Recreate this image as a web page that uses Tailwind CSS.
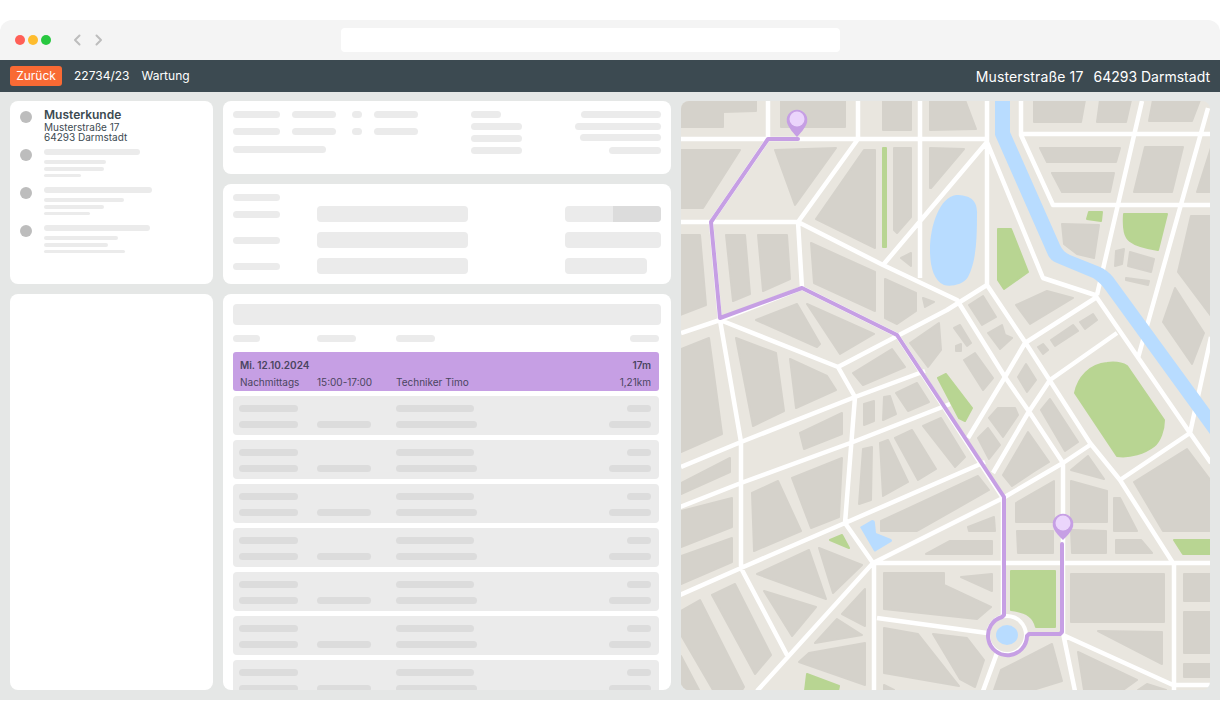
<!DOCTYPE html>
<html lang="de">

<head>
    <meta charset="UTF-8">
    <meta name="viewport" content="width=device-width, initial-scale=1.0">
    <title>Termin - Musterkunde</title>
    <script src="https://cdn.jsdelivr.net/npm/@tailwindcss/browser@4"></script>
</head>

<body class="bg-white [font-family:Inter,sans-serif] text-[#3c4a51]">
    <div class="h-[720px] overflow-hidden pt-5">
        <!-- Browser chrome -->
        <div class="h-10 bg-[#f4f4f4] rounded-t-xl flex items-center relative">
            <div class="flex gap-[3px] pl-[15px]">
                <span class="w-[10px] h-[10px] rounded-full bg-[#ff5f57]"></span>
                <span class="w-[10px] h-[10px] rounded-full bg-[#febc2e]"></span>
                <span class="w-[10px] h-[10px] rounded-full bg-[#28c840]"></span>
            </div>
            <div class="flex gap-3 ml-[21px]">
                <svg class="w-[10px] h-[12px]" viewBox="0 0 10 12" fill="none" stroke="#bdbdbd" stroke-width="2" stroke-linecap="round" stroke-linejoin="round"><path d="M7.5 1.5 3 6l4.5 4.5"/></svg>
                <svg class="w-[10px] h-[12px]" viewBox="0 0 10 12" fill="none" stroke="#bdbdbd" stroke-width="2" stroke-linecap="round" stroke-linejoin="round"><path d="M2.5 1.5 7 6l-4.5 4.5"/></svg>
            </div>
            <div class="ml-[237px] w-[499px] h-6 bg-white rounded-[4px]"></div>
        </div>

        <!-- Toolbar -->
        <div class="h-8 bg-[#3c4a51] text-white flex items-center px-[10px]">
            <span class="w-[52px] h-5 bg-[#f96a34] rounded-[3px] text-[12px] leading-5 text-center">Zurück</span>
            <span class="ml-3 text-[12px]">22734/23</span>
            <span class="ml-3 text-[12px]">Wartung</span>
            <span class="ml-auto text-[14px] tracking-[0.01em]">Musterstraße 17</span>
            <span class="ml-[10px] text-[14px]">64293 Darmstadt</span>
        </div>

        <!-- Content -->
        <div class="h-[608px] bg-[#e5e7e6] p-[10px] pt-[9px] flex gap-[10px]">
            <!-- Left column -->
            <div class="w-[203px] flex flex-col gap-[10px]">
                <div class="h-[183px] bg-white rounded-lg pl-[10px] pt-[10px]">
                    <div class="h-[38px] flex gap-3">
                        <span class="w-3 h-3 rounded-full bg-[#bdbdbd]"></span>
                        <div class="-mt-[2px]">
                            <div class="text-[12px] leading-3 font-semibold">Musterkunde</div>
                            <div class="text-[10px] leading-[10px] mt-[1px]">Musterstraße 17</div>
                            <div class="text-[10px] leading-[10px]">64293 Darmstadt</div>
                        </div>
                    </div>
                    <div class="h-[38px] flex gap-3">
                        <span class="w-3 h-3 rounded-full bg-[#bdbdbd]"></span>
                        <div class="flex flex-col gap-[3px]">
                            <div class="w-[96px] h-[6px] rounded-full bg-[#ebebeb] mb-[2px]"></div>
                            <div class="w-[62px] h-1 rounded-full bg-[#ebebeb]"></div>
                            <div class="w-[60px] h-1 rounded-full bg-[#ebebeb]"></div>
                            <div class="w-[37px] h-[3px] rounded-full bg-[#ebebeb]"></div>
                        </div>
                    </div>
                    <div class="h-[38px] flex gap-3">
                        <span class="w-3 h-3 rounded-full bg-[#bdbdbd]"></span>
                        <div class="flex flex-col gap-[3px]">
                            <div class="w-[108px] h-[6px] rounded-full bg-[#ebebeb] mb-[2px]"></div>
                            <div class="w-[80px] h-1 rounded-full bg-[#ebebeb]"></div>
                            <div class="w-[60px] h-1 rounded-full bg-[#ebebeb]"></div>
                            <div class="w-[46px] h-[3px] rounded-full bg-[#ebebeb]"></div>
                        </div>
                    </div>
                    <div class="h-[38px] flex gap-3">
                        <span class="w-3 h-3 rounded-full bg-[#bdbdbd]"></span>
                        <div class="flex flex-col gap-[3px]">
                            <div class="w-[106px] h-[6px] rounded-full bg-[#ebebeb] mb-[2px]"></div>
                            <div class="w-[74px] h-1 rounded-full bg-[#ebebeb]"></div>
                            <div class="w-[64px] h-1 rounded-full bg-[#ebebeb]"></div>
                            <div class="w-[81px] h-[3px] rounded-full bg-[#ebebeb]"></div>
                        </div>
                    </div>
                </div>
                <div class="flex-1 bg-white rounded-lg"></div>
            </div>

            <!-- Middle column -->
            <div class="w-[448px] flex flex-col gap-[10px]">
                <!-- Summary card -->
                <div class="h-[73px] bg-white rounded-lg p-[10px] flex">
                    <div class="w-[238px]">
                        <div class="flex">
                            <div class="w-[47px] h-[7px] rounded-[4px] bg-[#ebebeb]"></div>
                            <div class="ml-3 w-[44px] h-[7px] rounded-[4px] bg-[#ebebeb]"></div>
                            <div class="ml-4 w-[10px] h-[7px] rounded-[4px] bg-[#ebebeb]"></div>
                            <div class="ml-3 w-[44px] h-[7px] rounded-[4px] bg-[#ebebeb]"></div>
                        </div>
                        <div class="flex mt-[10px]">
                            <div class="w-[47px] h-[7px] rounded-[4px] bg-[#ebebeb]"></div>
                            <div class="ml-3 w-[44px] h-[7px] rounded-[4px] bg-[#ebebeb]"></div>
                            <div class="ml-4 w-[10px] h-[7px] rounded-[4px] bg-[#ebebeb]"></div>
                            <div class="ml-3 w-[44px] h-[7px] rounded-[4px] bg-[#ebebeb]"></div>
                        </div>
                        <div class="mt-[11px] w-[93px] h-[7px] rounded-[4px] bg-[#ebebeb]"></div>
                    </div>
                    <div class="flex flex-col gap-[5px]">
                        <div class="w-[30px] h-[7px] rounded-[4px] bg-[#ebebeb]"></div>
                        <div class="w-[51px] h-[7px] rounded-[4px] bg-[#ebebeb]"></div>
                        <div class="w-[51px] h-[7px] rounded-[4px] bg-[#ebebeb]"></div>
                        <div class="w-[51px] h-[7px] rounded-[4px] bg-[#ebebeb]"></div>
                    </div>
                    <div class="flex-1 flex flex-col items-end gap-[5px]">
                        <div class="w-[80px] h-[7px] rounded-[4px] bg-[#ebebeb]"></div>
                        <div class="w-[86px] h-[7px] rounded-[4px] bg-[#ebebeb]"></div>
                        <div class="w-[81px] h-[7px] rounded-[4px] bg-[#ebebeb] -mt-px mb-px"></div>
                        <div class="w-[52px] h-[7px] rounded-[4px] bg-[#ebebeb]"></div>
                    </div>
                </div>

                <!-- Form card -->
                <div class="h-[100px] bg-white rounded-lg p-[10px]">
                    <div class="w-[47px] h-[7px] rounded-[4px] bg-[#ebebeb] mb-[5px]"></div>
                    <div class="grid grid-cols-[84px_151px_97px_96px] gap-y-[10px] items-center">
                        <div class="w-[47px] h-[7px] rounded-[4px] bg-[#ebebeb]"></div>
                        <div class="h-4 rounded-[4px] bg-[#ebebeb]"></div>
                        <div></div>
                        <div class="h-4 rounded-[4px] bg-[#ebebeb] overflow-hidden flex justify-end"><div class="w-12 bg-[#dcdcdc]"></div></div>
                        <div class="w-[47px] h-[7px] rounded-[4px] bg-[#ebebeb]"></div>
                        <div class="h-4 rounded-[4px] bg-[#ebebeb]"></div>
                        <div></div>
                        <div class="h-4 rounded-[4px] bg-[#ebebeb]"></div>
                        <div class="w-[47px] h-[7px] rounded-[4px] bg-[#ebebeb]"></div>
                        <div class="h-4 rounded-[4px] bg-[#ebebeb]"></div>
                        <div></div>
                        <div class="w-[82px] h-4 rounded-[4px] bg-[#ebebeb]"></div>
                    </div>
                </div>

                <!-- Appointment list -->
                <div class="flex-1 min-h-0 bg-white rounded-lg overflow-hidden px-[10px] pt-[10px]">
                    <div class="h-[21px] rounded-[4px] bg-[#ebebeb]"></div>
                    <div class="grid grid-cols-[84px_79px_1fr_auto] w-[426px] mt-[10px] mb-[10px]">
                        <div class="w-[27px] h-[7px] rounded-[4px] bg-[#ebebeb]"></div>
                        <div class="w-[39px] h-[7px] rounded-[4px] bg-[#ebebeb]"></div>
                        <div class="w-[39px] h-[7px] rounded-[4px] bg-[#ebebeb]"></div>
                        <div class="w-[29px] h-[7px] rounded-[4px] bg-[#ebebeb]"></div>
                    </div>
                    <div class="w-[426px] flex flex-col gap-[5px]">
                        <div class="h-[39px] shrink-0 rounded-[3px] bg-[#c69fe4] pl-[7px] pr-2 pt-[6px] grid grid-cols-[77px_79px_1fr_auto] text-[10px] leading-[15px] text-[#4a4560]">
                            <div class="col-span-3 font-semibold whitespace-nowrap">Mi. 12.10.2024</div>
                            <div class="font-semibold text-right">17m</div>
                            <div>Nachmittags</div>
                            <div>15:00-17:00</div>
                            <div>Techniker Timo</div>
                            <div class="text-right">1,21km</div>
                        </div>
                        <div class="h-[39px] shrink-0 rounded-[4px] bg-[#ebebeb] pl-[6px] pr-2 pt-[9px] grid grid-cols-[78px_79px_1fr_auto] gap-y-[9px] content-start justify-items-start">
                            <div class="w-[59px] h-[7px] rounded-[4px] bg-[#dcdcdc]"></div><div></div><div class="w-[78px] h-[7px] rounded-[4px] bg-[#dcdcdc]"></div><div class="w-[24px] h-[7px] rounded-[4px] bg-[#dcdcdc] justify-self-end"></div>
                            <div class="w-[59px] h-[7px] rounded-[4px] bg-[#dcdcdc]"></div><div class="w-[54px] h-[7px] rounded-[4px] bg-[#dcdcdc]"></div><div class="w-[81px] h-[7px] rounded-[4px] bg-[#dcdcdc]"></div><div class="w-[42px] h-[7px] rounded-[4px] bg-[#dcdcdc]"></div>
                        </div>
                        <div class="h-[39px] shrink-0 rounded-[4px] bg-[#ebebeb] pl-[6px] pr-2 pt-[9px] grid grid-cols-[78px_79px_1fr_auto] gap-y-[9px] content-start justify-items-start">
                            <div class="w-[59px] h-[7px] rounded-[4px] bg-[#dcdcdc]"></div><div></div><div class="w-[78px] h-[7px] rounded-[4px] bg-[#dcdcdc]"></div><div class="w-[24px] h-[7px] rounded-[4px] bg-[#dcdcdc] justify-self-end"></div>
                            <div class="w-[59px] h-[7px] rounded-[4px] bg-[#dcdcdc]"></div><div class="w-[54px] h-[7px] rounded-[4px] bg-[#dcdcdc]"></div><div class="w-[81px] h-[7px] rounded-[4px] bg-[#dcdcdc]"></div><div class="w-[42px] h-[7px] rounded-[4px] bg-[#dcdcdc]"></div>
                        </div>
                        <div class="h-[39px] shrink-0 rounded-[4px] bg-[#ebebeb] pl-[6px] pr-2 pt-[9px] grid grid-cols-[78px_79px_1fr_auto] gap-y-[9px] content-start justify-items-start">
                            <div class="w-[59px] h-[7px] rounded-[4px] bg-[#dcdcdc]"></div><div></div><div class="w-[78px] h-[7px] rounded-[4px] bg-[#dcdcdc]"></div><div class="w-[24px] h-[7px] rounded-[4px] bg-[#dcdcdc] justify-self-end"></div>
                            <div class="w-[59px] h-[7px] rounded-[4px] bg-[#dcdcdc]"></div><div class="w-[54px] h-[7px] rounded-[4px] bg-[#dcdcdc]"></div><div class="w-[81px] h-[7px] rounded-[4px] bg-[#dcdcdc]"></div><div class="w-[42px] h-[7px] rounded-[4px] bg-[#dcdcdc]"></div>
                        </div>
                        <div class="h-[39px] shrink-0 rounded-[4px] bg-[#ebebeb] pl-[6px] pr-2 pt-[9px] grid grid-cols-[78px_79px_1fr_auto] gap-y-[9px] content-start justify-items-start">
                            <div class="w-[59px] h-[7px] rounded-[4px] bg-[#dcdcdc]"></div><div></div><div class="w-[78px] h-[7px] rounded-[4px] bg-[#dcdcdc]"></div><div class="w-[24px] h-[7px] rounded-[4px] bg-[#dcdcdc] justify-self-end"></div>
                            <div class="w-[59px] h-[7px] rounded-[4px] bg-[#dcdcdc]"></div><div class="w-[54px] h-[7px] rounded-[4px] bg-[#dcdcdc]"></div><div class="w-[81px] h-[7px] rounded-[4px] bg-[#dcdcdc]"></div><div class="w-[42px] h-[7px] rounded-[4px] bg-[#dcdcdc]"></div>
                        </div>
                        <div class="h-[39px] shrink-0 rounded-[4px] bg-[#ebebeb] pl-[6px] pr-2 pt-[9px] grid grid-cols-[78px_79px_1fr_auto] gap-y-[9px] content-start justify-items-start">
                            <div class="w-[59px] h-[7px] rounded-[4px] bg-[#dcdcdc]"></div><div></div><div class="w-[78px] h-[7px] rounded-[4px] bg-[#dcdcdc]"></div><div class="w-[24px] h-[7px] rounded-[4px] bg-[#dcdcdc] justify-self-end"></div>
                            <div class="w-[59px] h-[7px] rounded-[4px] bg-[#dcdcdc]"></div><div class="w-[54px] h-[7px] rounded-[4px] bg-[#dcdcdc]"></div><div class="w-[81px] h-[7px] rounded-[4px] bg-[#dcdcdc]"></div><div class="w-[42px] h-[7px] rounded-[4px] bg-[#dcdcdc]"></div>
                        </div>
                        <div class="h-[39px] shrink-0 rounded-[4px] bg-[#ebebeb] pl-[6px] pr-2 pt-[9px] grid grid-cols-[78px_79px_1fr_auto] gap-y-[9px] content-start justify-items-start">
                            <div class="w-[59px] h-[7px] rounded-[4px] bg-[#dcdcdc]"></div><div></div><div class="w-[78px] h-[7px] rounded-[4px] bg-[#dcdcdc]"></div><div class="w-[24px] h-[7px] rounded-[4px] bg-[#dcdcdc] justify-self-end"></div>
                            <div class="w-[59px] h-[7px] rounded-[4px] bg-[#dcdcdc]"></div><div class="w-[54px] h-[7px] rounded-[4px] bg-[#dcdcdc]"></div><div class="w-[81px] h-[7px] rounded-[4px] bg-[#dcdcdc]"></div><div class="w-[42px] h-[7px] rounded-[4px] bg-[#dcdcdc]"></div>
                        </div>
                        <div class="h-[39px] shrink-0 rounded-[4px] bg-[#ebebeb] pl-[6px] pr-2 pt-[9px] grid grid-cols-[78px_79px_1fr_auto] gap-y-[9px] content-start justify-items-start">
                            <div class="w-[59px] h-[7px] rounded-[4px] bg-[#dcdcdc]"></div><div></div><div class="w-[78px] h-[7px] rounded-[4px] bg-[#dcdcdc]"></div><div class="w-[24px] h-[7px] rounded-[4px] bg-[#dcdcdc] justify-self-end"></div>
                            <div class="w-[59px] h-[7px] rounded-[4px] bg-[#dcdcdc]"></div><div class="w-[54px] h-[7px] rounded-[4px] bg-[#dcdcdc]"></div><div class="w-[81px] h-[7px] rounded-[4px] bg-[#dcdcdc]"></div><div class="w-[42px] h-[7px] rounded-[4px] bg-[#dcdcdc]"></div>
                        </div>
                    </div>
                </div>
            </div>

            <!-- Map, drawn in page coordinates -->
            <div class="w-[529px] h-[589px] rounded-lg overflow-hidden">
                <svg class="block w-[529px] h-[589px]" viewBox="681 101 529 589" fill="none">
                    <rect x="681" y="101" width="529" height="589" fill="#e9e6df"/>
                    <!-- blocks -->
                    <path fill="#d5d2cb" stroke="#d5d2cb" stroke-width="2" stroke-linejoin="round" d="
                    M680,100H756V111L723,112V127H680Z M781,100H845V127H781Z M883,100H911V130H883Z M930,100H965L976,129L930,130Z
                    M680,150H740L703,208H680Z M775,150L836,148L795,205Z M864,150H875V248L816,219Z M894,148H911V217L897,233L894,230Z M930,148L964,149L931,188H930Z
                    M680,235H700L706,305L680,315Z M726,235H745L750,294L733,301Z M758,235H787L790,279L763,291Z M811,243L875,272V311L814,283Z M885,279L916,293V311L897,324L885,318Z M901,258L911,253V266Z M923,298L934,302L925,307Z
                    M756,320L797,304L820,344L817,347Z M807,304L874,334L840,354Z M681,349L709,338L722,434L681,452Z M736,338L776,353L784,411L753,426Z M790,359L827,376L836,390L796,408Z
                    M853,373L892,349L905,367L863,385Z M910,343L939,323L941,350L928,367Z M956,346L961,344V351H956Z M800,433L842,413V434L804,449Z M864,404L874,401V421L864,425Z M884,397L890,396L896,414L883,420Z M896,393L917,383L929,402L908,411Z
                    M681,483L730,458V472L681,494Z M792,478L842,458L839,517L811,528Z M752,493L778,481L801,531L754,551Z M863,449L872,447L871,500L859,504Z M880,443L888,440L908,482L883,496Z M895,438L912,430L936,469L918,480Z M923,426L941,418L965,457L955,467Z
                    M681,511L732,498V527L681,547Z M681,556L732,538V562L681,584Z M681,611L700,600L744,687L742,690H713L681,635Z M712,595L735,584L771,655L755,674Z M681,656L699,690H681Z
                    M757,574L809,550L826,599Z M764,591L816,607L792,636Z M819,548L862,565L833,593Z M842,614L865,589V626Z M815,643L837,619L862,635Z M799,662L809,653L865,643V685Z
                    M881,531V521L978,476L989,490L917,531Z M926,554L950,541H992V554Z M968,527L994,517L995,531L969,531Z M884,573H944V585L991,607L977,619L884,609Z M961,577L992,574V591Z M884,628L918,634L959,686L884,673Z M933,634L967,638L984,660L975,687L960,679Z M884,685L894,690H884Z
                    M1001,670L1052,644L1062,681L1033,690H994Z M1078,652L1137,680L1123,690H1084Z M1138,690L1147,684L1166,690Z M1071,574H1164V622H1071Z M1098,631L1162,632V664Z M1184,574H1211V601H1184Z M1184,612H1211V653H1184Z M1184,664H1211V677H1184Z
                    M1016,503L1054,481V522H1016Z M1071,481L1107,491V522H1071Z M1114,498H1120L1137,531H1114Z M1134,482L1187,449L1211,481V531H1163Z M1017,531H1053V553H1018Z M1071,530L1106,531V553H1072Z M1116,540H1141L1152,553H1116Z M1071,470L1088,456L1104,479Z
                    M954,328L960,325L971,343L967,346Z M969,305L983,296L996,317L982,325Z M988,333L1002,325L1005,335L1012,338L1000,349Z M964,360L975,353L993,378L983,390Z M1018,377L1026,364L1036,380L1027,392Z M1038,347L1043,344L1048,350L1043,354Z M1051,340L1073,325L1078,331L1055,346Z M1080,322L1093,314L1097,320L1085,329Z M1016,305L1047,291L1073,298L1030,324Z
                    M989,418L998,408H1015L1018,415L1003,437Z M978,438L988,428L1000,445L989,459Z M1003,475L1028,432L1049,462L1033,472L1012,486Z M1041,410L1050,399L1078,442L1065,451Z
                    M1191,216H1211V316L1178,272Z M1163,322L1175,288L1204,333L1192,364Z M1040,148H1120L1116,162H1047Z M1052,173H1114L1110,192H1062Z M1145,147H1183L1172,192H1134Z M1211,148L1197,192H1211Z M1034,100H1085L1081,122H1034Z M1100,100H1131L1126,122H1097Z M1153,100H1200L1192,121H1149Z
                    M1062,224L1099,225L1094,258L1077,254L1064,244Z M1116,251L1124,249L1122,264L1115,266Z M1130,252L1154,259L1151,272L1128,266Z M1126,278L1149,281L1148,285L1126,280Z"/>
                    <!-- parks -->
                    <path fill="#b8d592" stroke="#b8d592" stroke-width="2" stroke-linejoin="round" d="
                    M883,148H886V247H883Z M998,229H1011L1028,272L1004,289L998,280Z M1089,212H1102L1101,221L1087,219Z M1124,214H1167L1158,250C1145,248 1135,245 1130,241C1125,237 1123,230 1124,214Z
                    M1075,393C1078,378 1090,364 1107,363C1115,362 1122,363 1127,366L1164,420C1164,430 1160,441 1154,446C1145,453 1130,458 1117,456Z
                    M938,378L946,374L972,408L965,421L959,418Z M830,540L842,535L849,548Z M807,674L839,686L838,691H805Z M1011,571H1055V627H1036C1034,618 1028,612 1011,610Z M1174,540H1211V554H1183Z"/>
                    <!-- roads -->
                    <path stroke="#fff" stroke-width="4.5" stroke-linejoin="round" d="
                    M680,139H987 M768,101V139 M858,101V139 M920,101V278 M858,139L798,222 M680,222H798 M711,222L768,139 M711,222L720,320 M798,222L802,288 M798,222L883,265L957,300L1005,377L1030,413L1063,463 M883,265L987,142
                    M987,101V285 M838,367L947,310L987,285 M720,320L838,367L855,397 M681,467L741,442L855,397L925,371 M720,320L741,442V568 M680,507L741,483L853,442L950,404 M855,397L845,523L873,563 M680,595L741,568L845,523L985,462
                    M802,288L897,335L1003,498V616 M720,320L802,288 M681,333L720,320
                    M987,285L1027,345L1090,443L1120,480L1173,563 M1097,297L1025,343L1005,377L968,438 M1117,333L1050,380L1028,413L993,473 M1095,295L1190,433L1211,463 M1190,433L1120,480 M1190,433L1211,337 M1003,498L1063,463L1090,445 M1063,463V633
                    M1021,101V135L1053,205H1211 M1021,134H1211 M1142,101L1097,295 M1208,108L1138,358 M987,142L1043,278L1095,295
                    M741,568L787,655 M873,563L757,691 M873,563H1211 M873,563L1003,498 M874,563V691 M877,618L987,633 M997,653L983,691 M1063,633L1075,691 M1063,635L1173,685H1211 M1174,563V691"/>
                    <circle cx="1007" cy="635" r="21" fill="#fff"/>
                    <circle cx="1007" cy="635" r="17" fill="#e9e6df"/>
                    <!-- water -->
                    <path fill="#b8dcff" d="M995,100H1010V132L1060,245Q1063,252 1070,255L1100,267Q1107,270 1113,277L1210,410V434L1107,292Q1100,282 1093,278L1057,263Q1050,260 1048,255L995,135Z
                    M956,195C970,195 978,200 977,215C977,240 976,262 968,277C963,285 950,287 944,285C933,280 930,265 930,250C930,225 940,197 956,195Z
                    M860,527L872,520Q875,520 875,523L876,533L891,539Q893,541 891,542L876,551Q875,552 874,551Z"/>
                    <ellipse cx="1007" cy="635" rx="11" ry="10" fill="#b8dcff"/>
                    <!-- route -->
                    <path stroke="#c69fe4" stroke-width="4" stroke-linecap="round" stroke-linejoin="round" d="M798,139H768L711,222L720,318L802,288L897,335L1004,497V615L1002,617A19.5,19.5 0 1 0 1027,636L1029,634H1060L1062,632V544"/>
                    <!-- pins -->
                    <path fill="#c69fe4" d="M787.5,124A10.3,10.3 0 1 1 806.5,124C805,128 800,134 797,137C794,134 789,128 787.5,124Z"/>
                    <circle cx="797" cy="119" r="7.5" fill="#ebd5fc"/>
                    <path fill="#c69fe4" d="M1053.5,528A10.3,10.3 0 1 1 1072.5,528C1071,532 1066,537 1063,540C1060,537 1055,532 1053.5,528Z"/>
                    <circle cx="1063" cy="523" r="7.5" fill="#ebd5fc"/>
                </svg>
            </div>
        </div>
    </div>
</body>

</html>
